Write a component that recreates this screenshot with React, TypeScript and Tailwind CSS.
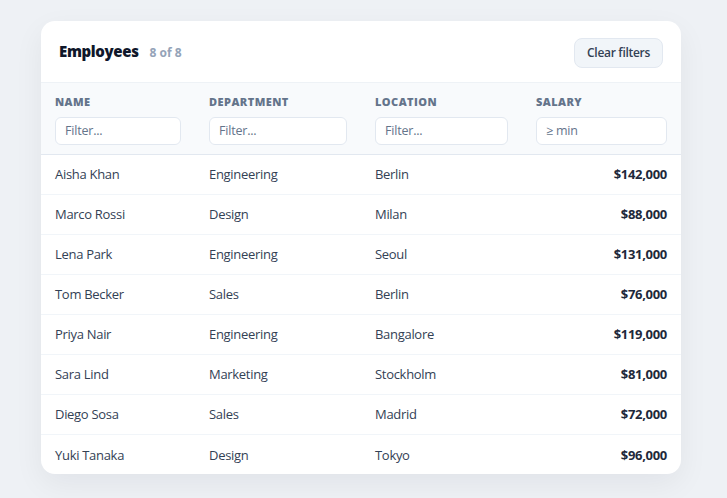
import { useState } from 'react'

interface Employee {
  name: string
  department: string
  location: string
  salary: number
}

const employees: Employee[] = [
  { name: 'Aisha Khan', department: 'Engineering', location: 'Berlin', salary: 142000 },
  { name: 'Marco Rossi', department: 'Design', location: 'Milan', salary: 88000 },
  { name: 'Lena Park', department: 'Engineering', location: 'Seoul', salary: 131000 },
  { name: 'Tom Becker', department: 'Sales', location: 'Berlin', salary: 76000 },
  { name: 'Priya Nair', department: 'Engineering', location: 'Bangalore', salary: 119000 },
  { name: 'Sara Lind', department: 'Marketing', location: 'Stockholm', salary: 81000 },
  { name: 'Diego Sosa', department: 'Sales', location: 'Madrid', salary: 72000 },
  { name: 'Yuki Tanaka', department: 'Design', location: 'Tokyo', salary: 96000 },
]

const inputClass =
  'mt-[6px] h-[28px] w-full rounded-md border border-[#e2e8f0] bg-white px-[9px] text-[12.5px] font-normal tracking-[-0.2px] text-[#334155] placeholder:text-[#64748b] outline-none'

const labelClass = 'text-[11px] font-extrabold uppercase tracking-[0.04em] text-[#64748b]'

export default function App() {
  const [name, setName] = useState('')
  const [dept, setDept] = useState('')
  const [loc, setLoc] = useState('')
  const [min, setMin] = useState('')

  const rows = employees.filter(
    (e) =>
      e.name.toLowerCase().includes(name.toLowerCase()) &&
      e.department.toLowerCase().includes(dept.toLowerCase()) &&
      e.location.toLowerCase().includes(loc.toLowerCase()) &&
      (min === '' || e.salary >= Number(min)),
  )

  const clear = () => {
    setName('')
    setDept('')
    setLoc('')
    setMin('')
  }

  return (
    <div className="min-h-[498px] bg-[#eef1f5] pt-[21px] pl-[41px] font-['Open_Sans',sans-serif]">
      <div className="w-[640px] overflow-hidden rounded-[14px] bg-white shadow-[0_10px_30px_rgba(15,23,42,0.06)]">
        {/* Card header */}
        <div className="flex h-[62px] items-center justify-between border-b border-[#eef2f6] pl-[18px] pr-[18px]">
          <div className="flex items-baseline gap-[11px]">
            <h2 className="text-[15px] font-extrabold tracking-[-0.35px] text-[#0f172a]">Employees</h2>
            <span className="text-[12px] font-bold text-[#94a3b8]">
              {rows.length} of {employees.length}
            </span>
          </div>
          <button
            onClick={clear}
            className="mt-[2px] h-[30px] rounded-lg border border-[#e2e8f0] bg-[#f1f5f9] px-[12px] text-[12px] font-semibold tracking-[-0.3px] text-[#334155]"
          >
            Clear filters
          </button>
        </div>

        <table className="w-full table-fixed border-collapse">
          <colgroup>
            <col className="w-[154px]" />
            <col className="w-[166px]" />
            <col className="w-[161px]" />
            <col className="w-[159px]" />
          </colgroup>
          <thead className="bg-[#f8fafc]">
            <tr className="border-b border-[#e2e8f0]">
              <th className="px-[14px] pt-[11px] pb-[9px] text-left align-top">
                <div className={labelClass}>Name</div>
                <input className={inputClass} placeholder="Filter..." value={name} onChange={(e) => setName(e.target.value)} />
              </th>
              <th className="px-[14px] pt-[11px] pb-[9px] text-left align-top">
                <div className={labelClass}>Department</div>
                <input className={inputClass} placeholder="Filter..." value={dept} onChange={(e) => setDept(e.target.value)} />
              </th>
              <th className="px-[14px] pt-[11px] pb-[9px] text-left align-top">
                <div className={labelClass}>Location</div>
                <input className={inputClass} placeholder="Filter..." value={loc} onChange={(e) => setLoc(e.target.value)} />
              </th>
              <th className="px-[14px] pt-[11px] pb-[9px] text-left align-top">
                <div className={labelClass}>Salary</div>
                <input className={inputClass} placeholder="≥ min" value={min} onChange={(e) => setMin(e.target.value)} />
              </th>
            </tr>
          </thead>
          <tbody>
            {rows.map((e) => (
              <tr
                key={e.name}
                className="h-[40px] border-b border-[#f1f5f9] text-[13px] tracking-[-0.3px] text-[#334155] last:border-b-0"
              >
                <td className="px-[14px] pt-[2px]">{e.name}</td>
                <td className="px-[14px] pt-[2px]">{e.department}</td>
                <td className="px-[14px] pt-[2px]">{e.location}</td>
                <td className="px-[14px] pt-[2px] text-right font-bold text-[#1e293b]">
                  ${e.salary.toLocaleString('en-US')}
                </td>
              </tr>
            ))}
          </tbody>
        </table>
      </div>
    </div>
  )
}
